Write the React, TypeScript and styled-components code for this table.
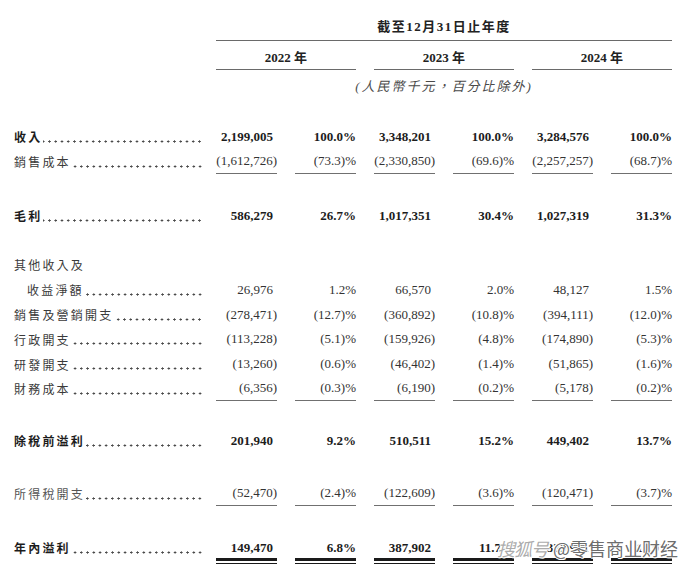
import React from 'react';
import styled, { createGlobalStyle } from 'styled-components';

type Line = {
  label: string;
  values?: string[];
  bold?: boolean;
  indent?: boolean;
  rule?: 'single' | 'double';
  noLeader?: boolean;
  light?: boolean;
};

type Block = { gap: number; line: Line };

const rows: Block[] = [
  { gap: 20.6, line: { label: '收入', bold: true, values: ['2,199,005', '100.0%', '3,348,201', '100.0%', '3,284,576', '100.0%'] } },
  { gap: 0, line: { label: '銷售成本', rule: 'single', values: ['(1,612,726)', '(73.3)%', '(2,330,850)', '(69.6)%', '(2,257,257)', '(68.7)%'] } },
  { gap: 29.4, line: { label: '毛利', bold: true, values: ['586,279', '26.7%', '1,017,351', '30.4%', '1,027,319', '31.3%'] } },
  { gap: 24.2, line: { label: '其他收入及', noLeader: true } },
  { gap: 0, line: { label: '收益淨額', indent: true, values: ['26,976', '1.2%', '66,570', '2.0%', '48,127', '1.5%'] } },
  { gap: 0, line: { label: '銷售及營銷開支', values: ['(278,471)', '(12.7)%', '(360,892)', '(10.8)%', '(394,111)', '(12.0)%'] } },
  { gap: 0, line: { label: '行政開支', values: ['(113,228)', '(5.1)%', '(159,926)', '(4.8)%', '(174,890)', '(5.3)%'] } },
  { gap: 0, line: { label: '研發開支', values: ['(13,260)', '(0.6)%', '(46,402)', '(1.4)%', '(51,865)', '(1.6)%'] } },
  { gap: 0, line: { label: '財務成本', rule: 'single', values: ['(6,356)', '(0.3)%', '(6,190)', '(0.2)%', '(5,178)', '(0.2)%'] } },
  { gap: 27.2, line: { label: '除稅前溢利', bold: true, values: ['201,940', '9.2%', '510,511', '15.2%', '449,402', '13.7%'] } },
  { gap: 28.2, line: { label: '所得稅開支', light: true, rule: 'single', values: ['(52,470)', '(2.4)%', '(122,609)', '(3.6)%', '(120,471)', '(3.7)%'] } },
  { gap: 29.2, line: { label: '年內溢利', bold: true, rule: 'double', values: ['149,470', '6.8%', '387,902', '11.7%', '329,931', '10.0%'] } },
];

const GlobalStyle = createGlobalStyle`
  body {
    margin: 0;
    background: #ffffff;
  }
`;

const Page = styled.div`
  position: relative;
  width: 690px;
  height: 571px;
  overflow: hidden;
  padding-left: 14px;
  box-sizing: border-box;
  font-family: "Liberation Serif", "Noto Sans CJK TC", serif;
  color: #2b2b2b;
`;

const Grid = styled.div<{ $h?: number }>`
  display: grid;
  grid-template-columns: 184px repeat(6, 61px);
  column-gap: 18px;
  height: ${p => (p.$h ? `${p.$h}px` : 'auto')};
`;

const Title = styled.div`
  grid-column: 2 / -1;
  height: 41px;
  box-sizing: border-box;
  display: flex;
  align-items: flex-end;
  justify-content: center;
  padding-bottom: 5px;
  border-bottom: 1px solid #6a6a6a;
  font-size: 13px;
  font-weight: 700;
  letter-spacing: 1.5px;
  color: #222;
`;

const Year = styled.div`
  grid-column: span 2;
  height: 29px;
  box-sizing: border-box;
  display: flex;
  align-items: center;
  justify-content: center;
  padding-top: 3px;
  border-bottom: 1px solid #6a6a6a;
  font-size: 13px;
  font-weight: 700;
  color: #222;
`;

const Unit = styled.div`
  grid-column: 2 / -1;
  height: 34px;
  line-height: 34px;
  text-align: center;
  font-style: italic;
  font-size: 13px;
  letter-spacing: 2px;
  color: #4a4a4a;
`;

const Spacer = styled.div<{ $h: number }>`
  height: ${p => p.$h}px;
`;

const Label = styled.div<{ $bold?: boolean; $indent?: boolean; $light?: boolean }>`
  display: flex;
  align-items: center;
  margin-right: -6px;
  padding-left: ${p => (p.$indent ? '13px' : '0')};
  font-family: "Noto Sans CJK TC", sans-serif;
  font-size: 12px;
  letter-spacing: 2.2px;
  font-weight: ${p => (p.$bold ? 700 : 400)};
  color: ${p => (p.$bold ? '#1c1c1c' : p.$light ? '#555' : '#3a3a3a')};
  white-space: nowrap;
`;

// dot leader drawn as a repeating dot pattern, anchored to the right edge
const Leader = styled.span`
  flex: 1;
  align-self: stretch;
  margin-left: 1px;
  background-image: radial-gradient(circle at center, #4a4a4a 0 0.9px, transparent 1.3px);
  background-size: 6.25px 3px;
  background-repeat: repeat-x;
  background-position: right 1px top 15.5px;
`;

const Cell = styled.div<{ $bold?: boolean; $pad?: boolean; $rule?: 'single' | 'double' }>`
  display: flex;
  align-items: center;
  justify-content: flex-end;
  box-sizing: border-box;
  padding-right: ${p => (p.$pad ? '4px' : '0')};
  font-size: 13px;
  font-weight: ${p => (p.$bold ? 700 : 400)};
  color: ${p => (p.$bold ? '#1c1c1c' : '#333')};
  white-space: nowrap;
  position: relative;
  border-bottom: ${p => (p.$rule === 'single' ? '1px solid #707070' : '0')};
`;

const DoubleRule = styled.div`
  position: absolute;
  left: 0;
  right: 0;
  bottom: -4px;
  height: 6px;
  border-top: 3px solid #1a1a1a;
  border-bottom: 1.5px solid #1a1a1a;
  box-sizing: border-box;
`;

const Watermark = styled.div`
  position: absolute;
  left: 497px;
  top: 535px;
  display: flex;
  align-items: center;
  gap: 5px;
  font-family: "Noto Sans CJK SC", sans-serif;
  font-size: 18px;
  color: rgba(90, 90, 90, 0.9);
  text-shadow: -1px 0 #fff, 1px 0 #fff, 0 -1px #fff, 0 1px #fff, 1px 1px #fff, -1px -1px #fff;
  white-space: nowrap;
`;

const Brand = styled.span`
  font-style: italic;
  color: rgba(150, 150, 150, 0.8);
  letter-spacing: -1px;
`;

const ROW_H = 24.8;

const App = () => {
  return (
    <Page>
      <GlobalStyle />
      <Grid>
        <Title>截至12月31日止年度</Title>
      </Grid>
      <Grid>
        <div />
        <Year>2022 年</Year>
        <Year>2023 年</Year>
        <Year>2024 年</Year>
      </Grid>
      <Grid>
        <Unit>(人民幣千元，百分比除外)</Unit>
      </Grid>
      {rows.map(({ gap, line }, i) => (
        <React.Fragment key={i}>
          {gap > 0 && <Spacer $h={gap} />}
          <Grid $h={ROW_H}>
            <Label $bold={line.bold} $indent={line.indent} $light={line.light}>
              {line.label}
              {!line.noLeader && <Leader />}
            </Label>
            {(line.values || []).map((v, j) => (
              <Cell
                key={j}
                $bold={line.bold}
                $pad={j % 2 === 0 && !v.startsWith('(')}
                $rule={line.rule}
              >
                {v}
                {line.rule === 'double' && <DoubleRule />}
              </Cell>
            ))}
          </Grid>
        </React.Fragment>
      ))}
      <Watermark>
        <Brand>搜狐号</Brand>
        <span>@零售商业财经</span>
      </Watermark>
    </Page>
  );
};

export default App;
